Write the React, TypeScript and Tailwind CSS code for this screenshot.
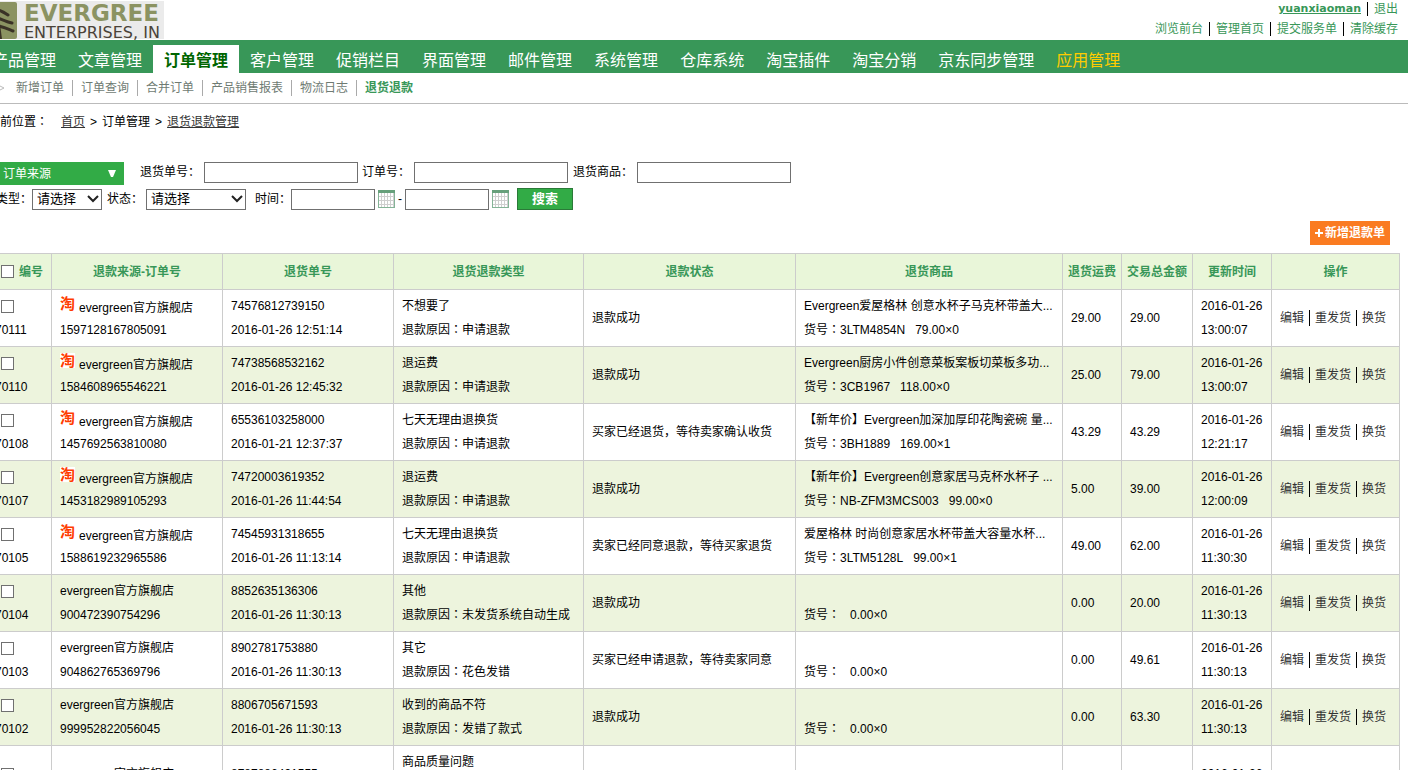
import React from "react";

const navItems = [
  "产品管理", "文章管理", "订单管理", "客户管理", "促销栏目", "界面管理", "邮件管理",
  "系统管理", "仓库系统", "淘宝插件", "淘宝分销", "京东同步管理", "应用管理",
];
const subItems = ["新增订单", "订单查询", "合并订单", "产品销售报表", "物流日志", "退货退款"];
const quickLinks = ["浏览前台", "管理首页", "提交服务单", "清除缓存"];

type Row = {
  id: string;
  tao?: boolean;
  order: string;
  refund: string;
  created: string;
  type: string;
  reason: string;
  extra?: string;
  status: string;
  product: string;
  sku: string;
  price: string;
  freight: string;
  total: string;
  time: string;
};

const rows: Row[] = [
  { id: "70111", tao: true, order: "1597128167805091", refund: "74576812739150", created: "2016-01-26 12:51:14", type: "不想要了", reason: "申请退款", status: "退款成功", product: "Evergreen爱屋格林 创意水杯子马克杯带盖大...", sku: "3LTM4854N", price: "79.00×0", freight: "29.00", total: "29.00", time: "13:00:07" },
  { id: "70110", tao: true, order: "1584608965546221", refund: "74738568532162", created: "2016-01-26 12:45:32", type: "退运费", reason: "申请退款", status: "退款成功", product: "Evergreen厨房小件创意菜板案板切菜板多功...", sku: "3CB1967", price: "118.00×0", freight: "25.00", total: "79.00", time: "13:00:07" },
  { id: "70108", tao: true, order: "1457692563810080", refund: "65536103258000", created: "2016-01-21 12:37:37", type: "七天无理由退换货", reason: "申请退款", status: "买家已经退货，等待卖家确认收货", product: "【新年价】Evergreen加深加厚印花陶瓷碗 量...", sku: "3BH1889", price: "169.00×1", freight: "43.29", total: "43.29", time: "12:21:17" },
  { id: "70107", tao: true, order: "1453182989105293", refund: "74720003619352", created: "2016-01-26 11:44:54", type: "退运费", reason: "申请退款", status: "退款成功", product: "【新年价】Evergreen创意家居马克杯水杯子 ...", sku: "NB-ZFM3MCS003", price: "99.00×0", freight: "5.00", total: "39.00", time: "12:00:09" },
  { id: "70105", tao: true, order: "1588619232965586", refund: "74545931318655", created: "2016-01-26 11:13:14", type: "七天无理由退换货", reason: "申请退款", status: "卖家已经同意退款，等待买家退货", product: "爱屋格林 时尚创意家居水杯带盖大容量水杯...", sku: "3LTM5128L", price: "99.00×1", freight: "49.00", total: "62.00", time: "11:30:30" },
  { id: "70104", order: "900472390754296", refund: "8852635136306", created: "2016-01-26 11:30:13", type: "其他", reason: "未发货系统自动生成", status: "退款成功", product: "", sku: "", price: "0.00×0", freight: "0.00", total: "20.00", time: "11:30:13" },
  { id: "70103", order: "904862765369796", refund: "8902781753880", created: "2016-01-26 11:30:13", type: "其它", reason: "花色发错", status: "买家已经申请退款，等待卖家同意", product: "", sku: "", price: "0.00×0", freight: "0.00", total: "49.61", time: "11:30:13" },
  { id: "70102", order: "999952822056045", refund: "8806705671593", created: "2016-01-26 11:30:13", type: "收到的商品不符", reason: "发错了款式", status: "退款成功", product: "", sku: "", price: "0.00×0", freight: "0.00", total: "63.30", time: "11:30:13" },
  { id: "70101", order: "998752822056012", refund: "8787886491555", created: "2016-01-26 11:30:13", type: "商品质量问题", reason: "商品质量问题", extra: "申请退款", status: "退款成功", product: "", sku: "", price: "0.00×0", freight: "0.00", total: "59.00", time: "11:30:13" },
];

const columns = ["退款来源-订单号", "退货单号", "退货退款类型", "退款状态", "退货商品", "退货运费", "交易总金额", "更新时间", "操作"];

const inputClass = "h-[21px] border border-[#707070] bg-white px-1 outline-none";

/* Full-width colon set in the middle of its em box. */
function Colon() {
  return <span className="font-['Noto_Sans_CJK_TC',sans-serif] leading-none">：</span>;
}

function CheckBox({ label }: { label: string }) {
  return (
    <input
      type="checkbox"
      aria-label={label}
      className="block size-[13px] shrink-0 appearance-none border border-[#707070] bg-white checked:bg-[#389758]"
    />
  );
}

function CalendarButton({ label }: { label: string }) {
  return (
    <button type="button" aria-label={label} className="mx-[3px]">
      <svg width="17" height="18" viewBox="0 0 17 18" shapeRendering="crispEdges" className="block">
        <rect x="0" y="0" width="17" height="18" fill="#84b396" />
        <rect x="0" y="0" width="17" height="3" fill="#67a07b" />
        <rect x="1" y="3" width="15" height="14" fill="#cfcfcf" />
        {[3, 7, 11, 15].map((y) =>
          [1, 4, 7, 10, 13].map((x) => (
            <rect key={`${x}-${y}`} x={x} y={y} width="2" height={y === 15 ? 2 : 3} fill="#fff" />
          )),
        )}
      </svg>
    </button>
  );
}

function Dropdown({ id, width }: { id: string; width: string }) {
  return (
    <span className={`relative flex ${width}`}>
      <select id={id} className="h-[21px] w-full appearance-none border border-[#707070] bg-white pb-[2px] pl-1 text-[13px] leading-[18px] outline-none">
        <option>请选择</option>
      </select>
      <svg width="12" height="8" viewBox="0 0 12 8" className="pointer-events-none absolute top-[6px] right-[3px]">
        <path d="M1 1l5 5 5-5" fill="none" stroke="#222" strokeWidth="2" />
      </svg>
    </span>
  );
}

function Logo() {
  return (
    <svg width="184" height="40" viewBox="-20 0 184 40" role="img" aria-label="Evergreen Enterprises" className="block">
      <rect x="-20" y="1" width="184" height="38" fill="#ebebeb" />
      <rect x="-20" y="2" width="37" height="37" rx="2" fill="#8b9362" />
      <path d="M-2 10C2 11 5 13 8 15M-2 18C3 20 7 22 12 23M-2 26C4 27 8 29 13 31" fill="none" stroke="#3a3226" strokeWidth="3" strokeLinecap="round" />
      <path d="M-3 4h3v20l2 15h-5z" fill="#3a3226" />
      <text x="24" y="21" fontSize="23" fontWeight="700" fill="#8b9362" fontFamily="DejaVu Sans, sans-serif">EVERGREE</text>
      <text x="24" y="38" fontSize="16" fill="#4a4238" fontFamily="DejaVu Sans, sans-serif">ENTERPRISES, IN</text>
    </svg>
  );
}

export default function App() {
  return (
    <div className="h-screen overflow-hidden bg-white font-['Liberation_Sans','Noto_Sans_CJK_SC',sans-serif] text-xs text-black">
      <div className="-ml-5">
        <header className="flex h-10 justify-between pr-[4px]">
          <Logo />
          <div className="flex flex-col items-end text-[#389758]">
            <div className="flex h-[18px] items-center">
              <a href="#user" className="pr-1.5 font-['DejaVu_Sans',sans-serif] text-[11px] font-bold underline">yuanxiaoman</a>
              <a href="#logout" className="border-l border-black px-1.5 leading-[14px]">退出</a>
            </div>
            <nav className="flex h-[22px] items-center divide-x divide-black">
              {quickLinks.map((t) => (
                <a key={t} href="#quick" className="px-1.5 leading-[14px]">{t}</a>
              ))}
            </nav>
          </div>
        </header>

        <nav className="flex h-[33px] items-end bg-[#389758] pl-px text-base whitespace-nowrap text-white">
          {navItems.map((t) => (
            <a
              key={t}
              href="#nav"
              className={
                t === "订单管理"
                  ? "h-7 bg-white px-[11px] leading-8 font-bold text-[#006600]"
                  : t === "应用管理"
                    ? "h-7 px-[11px] leading-8 text-[#ffcc00]"
                    : "h-7 px-[11px] leading-8"
              }
            >
              {t}
            </a>
          ))}
        </nav>

        <nav className="flex h-[31px] items-center border-b border-[#bbb] pl-5 text-[#6f7b73]">
          <svg width="8" height="8" viewBox="0 0 8 8" className="shrink-0">
            <path d="M0 2l4 2-4 2" fill="none" stroke="#bbb" />
          </svg>
          <div className="flex divide-x divide-[#aaa]">
            {subItems.map((t) => (
              <a key={t} href="#sub" className={t === "退货退款" ? "px-2 leading-4 font-bold text-[#389758]" : "px-2 leading-4"}>{t}</a>
            ))}
          </div>
        </nav>

        <div className="flex h-9 items-center gap-[5px] pl-2">
          <span className="pr-2">当前位置<Colon /></span>
          <a href="#home" className="text-[#333] underline">首页</a>
          <span>&gt;</span>
          <span>订单管理</span>
          <span>&gt;</span>
          <a href="#refunds" className="text-[#333] underline">退货退款管理</a>
        </div>

        <form className="mt-[22px]" onSubmit={(e) => e.preventDefault()}>
          <div className="flex items-start gap-1">
            <button type="button" className="mr-3 flex h-[23px] w-36 items-center justify-between bg-[#32ab46] pr-2 pl-[23px] text-white">
              订单来源
              <svg width="8" height="8" viewBox="0 0 8 8"><path d="M0 0h8L5 7H3z" fill="#fff" /></svg>
            </button>
            <label htmlFor="refundNo" className="leading-5">退货单号：</label>
            <input id="refundNo" type="text" className={`w-[154px] ${inputClass}`} />
            <label htmlFor="orderNo" className="leading-5">订单号：</label>
            <input id="orderNo" type="text" className={`w-[154px] ${inputClass}`} />
            <label htmlFor="goods" className="pl-px leading-5">退货商品：</label>
            <input id="goods" type="text" className={`w-[154px] ${inputClass}`} />
          </div>
          <div className="mt-[3px] flex h-[22px] items-center pl-4">
            <label htmlFor="kind">类型：</label>
            <Dropdown id="kind" width="w-[70px]" />
            <label htmlFor="state" className="pr-[3px] pl-[5px]">状态：</label>
            <Dropdown id="state" width="w-[100px]" />
            <label htmlFor="from" className="pl-[9px]">时间：</label>
            <input id="from" type="text" className={`w-[84px] ${inputClass}`} />
            <CalendarButton label="开始日期" />
            <span className="pr-[3px]">-</span>
            <input id="to" aria-label="结束时间" type="text" className={`w-[84px] ${inputClass}`} />
            <CalendarButton label="结束日期" />
            <button type="submit" className="ml-[5px] h-[22px] w-14 border border-[#2a7a38] bg-[#32ab46] text-[13px] leading-5 font-bold text-white">搜索</button>
          </div>
        </form>

        <div className="mt-[11px] flex justify-end pr-[18px]">
          <button type="button" className="flex h-6 w-20 items-center justify-center gap-0.5 bg-[#fa7b21] font-bold text-white">
            <svg width="8" height="8" viewBox="0 0 8 8"><path d="M4 0v8M0 4h8" stroke="#fff" strokeWidth="2" /></svg>
            新增退款单
          </button>
        </div>

        <div className="mt-2 pr-2">
          <table className="w-full table-fixed border-collapse border border-[#ccc] leading-6 whitespace-nowrap">
            <colgroup>
              <col className="w-[71px]" />
              <col className="w-[171px]" />
              <col className="w-[171px]" />
              <col className="w-[190px]" />
              <col className="w-[212px]" />
              <col />
              <col className="w-[59px]" />
              <col className="w-[71px]" />
              <col className="w-[79px]" />
              <col className="w-[128px]" />
            </colgroup>
            <thead>
              <tr className="h-9 bg-[#e9f6d9] text-[#389758]">
                <th className="border border-[#ccc] pl-5">
                  <span className="flex items-center gap-[5px]">
                    <CheckBox label="全选" />
                    编号
                  </span>
                </th>
                {columns.map((c) => (
                  <th key={c} className="border border-[#ccc] text-center">{c}</th>
                ))}
              </tr>
            </thead>
            <tbody>
              {rows.map((r) => (
                <tr key={r.id} className="even:bg-[#edf4dd] [&>td]:border [&>td]:border-[#ccc] [&>td]:px-2 [&>td]:py-1 [&>td]:leading-6">
                  <td>
                    <div className="flex h-6 items-center pl-3">
                      <CheckBox label={r.id} />
                    </div>
                    <div className="h-6 pl-1.5">{r.id}</div>
                  </td>
                  <td>
                    {r.tao ? (
                      <div className="flex h-6 items-start gap-1">
                        <span className="mt-0.5 flex size-[15px] items-center justify-center bg-white text-[15px] leading-none font-bold text-[#ff3c00]">淘</span>
                        <span className="mt-1 leading-5">evergreen官方旗舰店</span>
                      </div>
                    ) : (
                      <div className="h-6">evergreen官方旗舰店</div>
                    )}
                    <div className="h-6">{r.order}</div>
                  </td>
                  <td>
                    <div className="h-6">{r.refund}</div>
                    <div className="h-6">{r.created}</div>
                  </td>
                  <td>
                    <div className="h-6">{r.type}</div>
                    <div className="h-6">退款原因<Colon />{r.reason}</div>
                    {r.extra && <div className="h-6">{r.extra}</div>}
                  </td>
                  <td>{r.status}</td>
                  <td>
                    <div className="h-6">{r.product}</div>
                    <div className="flex h-6">
                      <span>货号<Colon />{r.sku}</span>
                      <span className="pl-2.5">{r.price}</span>
                    </div>
                  </td>
                  <td>{r.freight}</td>
                  <td>{r.total}</td>
                  <td>
                    <div className="h-6">2016-01-26</div>
                    <div className="h-6">{r.time}</div>
                  </td>
                  <td>
                    <div className="flex divide-x divide-black leading-4 text-[#333]">
                      <a href="#edit" className="pr-[5px]">编辑</a>
                      <a href="#resend" className="px-[5px]">重发货</a>
                      <a href="#exchange" className="pl-[5px]">换货</a>
                    </div>
                  </td>
                </tr>
              ))}
            </tbody>
          </table>
        </div>
      </div>
    </div>
  );
}
